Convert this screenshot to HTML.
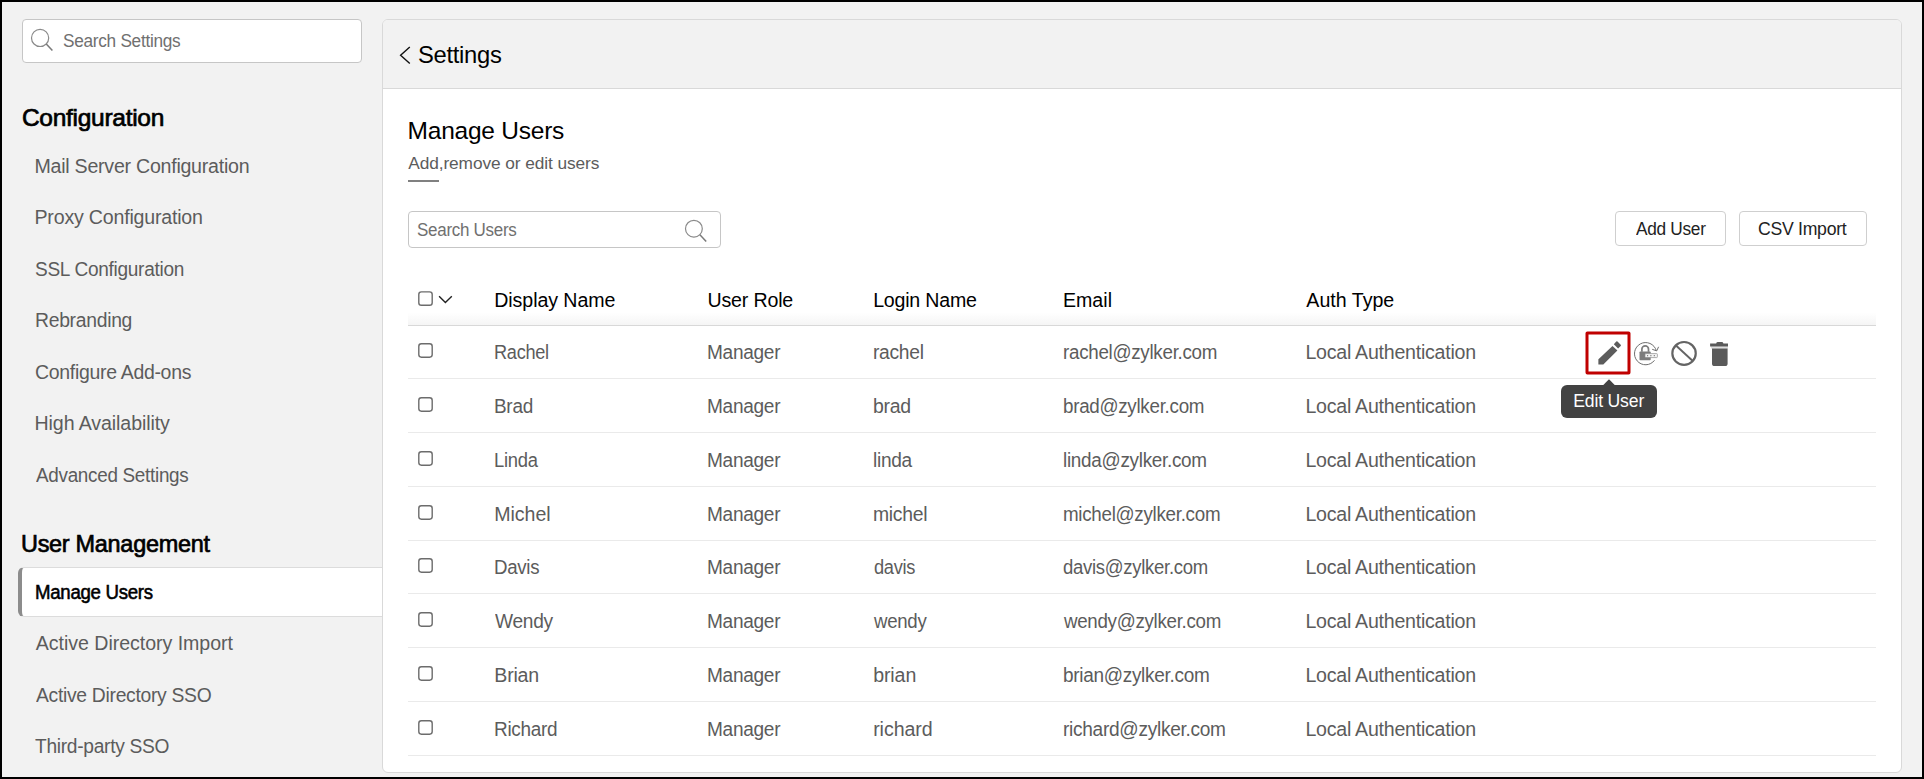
<!DOCTYPE html>
<html lang="en"><head><meta charset="utf-8"><title>Manage Users</title><style>
*{box-sizing:border-box}
html,body{margin:0;padding:0}
body{width:1924px;height:779px;background:#000;overflow:hidden;position:relative;font-family:"Liberation Sans", sans-serif}
#app{position:absolute;left:2px;top:2px;width:1920px;height:775px;background:#f2f2f2;overflow:hidden}
h1,h2,p,ul,li,a,button,label{margin:0;padding:0;font:inherit;border:0;background:none;list-style:none;text-decoration:none}
.a{position:absolute}
.t{position:absolute;white-space:nowrap;line-height:1;transform-origin:0 50%;font-weight:400}
.box{position:absolute;background:#fff;border:1px solid #c6c6c6;border-radius:4px}
.btn{border-color:#cfcfcf}
.line{position:absolute;left:406px;width:1468px;height:1px;background:#eaeaea}
.active{position:absolute;left:16px;top:565px;width:364px;height:50px;background:#fff;border-top:1px solid #dcdcdc;border-bottom:1px solid #dcdcdc;border-left:4px solid #8c8c8c;border-radius:6px 0 0 6px}
.panel{position:absolute;left:380px;top:17px;width:1520px;height:754px;background:#fff;border:1px solid #d9d9d9;border-radius:6px;overflow:hidden}
.panel-head{height:69px;background:#f2f2f2;border-bottom:1px solid #d9d9d9}
.thead-bg{position:absolute;left:406px;top:273px;width:1468px;height:50px;background:linear-gradient(#fff 0%,#fff 75%,#f5f5f5 100%)}
.tip{position:absolute;left:1559px;top:383px;width:96px;height:33px;background:#424242;border-radius:6px}
.rule{position:absolute;left:406px;top:178px;width:31px;height:2px;background:#808080}
</style></head><body><div id="app">
<aside class="sidebar">
 <div class="search" role="search">
  <div class="box" style="left:20px;top:17px;width:340px;height:44px"></div>
  <svg class="a" style="left:26px;top:23px" width="28" height="28" viewBox="28 25 28 28"><circle cx="40.1" cy="37.9" r="8.6" fill="none" stroke="#8a8a8a" stroke-width="1.2"/><path d="M46.3 44.1 L52.4 50.6" stroke="#7a7a7a" stroke-width="1.5" fill="none"/></svg>
  <label class="t" style="left:60.96px;top:30px;font-size:18.3px;color:#707070;transform:scaleX(0.9424);letter-spacing:-0.3px;">Search Settings</label>
 </div>
 <nav class="menu">
  <h2 class="t" style="left:19.9px;top:104px;font-size:24.5px;color:#000;-webkit-text-stroke:0.7px #000;letter-spacing:-0.275px;">Configuration</h2>
  <ul>
   <li><a class="t" style="left:32.5px;top:155px;font-size:19.6px;color:#5c5c5c;letter-spacing:-0.252px;">Mail Server Configuration</a></li>
   <li><a class="t" style="left:32.5px;top:206px;font-size:19.6px;color:#5c5c5c;letter-spacing:-0.203px;">Proxy Configuration</a></li>
   <li><a class="t" style="left:33.03px;top:258px;font-size:19.6px;color:#5c5c5c;transform:scaleX(0.9729);letter-spacing:-0.3px;">SSL Configuration</a></li>
   <li><a class="t" style="left:32.52px;top:309px;font-size:19.6px;color:#5c5c5c;transform:scaleX(0.9875);letter-spacing:-0.3px;">Rebranding</a></li>
   <li><a class="t" style="left:33.01px;top:361px;font-size:19.6px;color:#5c5c5c;transform:scaleX(0.9929);letter-spacing:-0.3px;">Configure Add-ons</a></li>
   <li><a class="t" style="left:32.5px;top:412px;font-size:19.6px;color:#5c5c5c;letter-spacing:-0.091px;">High Availability</a></li>
   <li><a class="t" style="left:34.0px;top:464px;font-size:19.6px;color:#5c5c5c;transform:scaleX(0.963);letter-spacing:-0.3px;">Advanced Settings</a></li>
  </ul>
  <h2 class="t" style="left:19.46px;top:530px;font-size:24.5px;color:#000;-webkit-text-stroke:0.7px #000;transform:scaleX(0.9574);letter-spacing:-0.3px;">User Management</h2>
  <ul>
   <li class="current"><div class="active"></div><a class="t" style="left:32.61px;top:581px;font-size:19.6px;color:#000;-webkit-text-stroke:0.55px #000;transform:scaleX(0.9514);letter-spacing:-0.3px;">Manage Users</a></li>
   <li><a class="t" style="left:33.8px;top:632px;font-size:19.6px;color:#5c5c5c;letter-spacing:-0.045px;">Active Directory Import</a></li>
   <li><a class="t" style="left:33.8px;top:684px;font-size:19.6px;color:#5c5c5c;transform:scaleX(0.9853);letter-spacing:-0.3px;">Active Directory SSO</a></li>
   <li><a class="t" style="left:33.31px;top:735px;font-size:19.6px;color:#5c5c5c;transform:scaleX(0.9794);letter-spacing:-0.3px;">Third-party SSO</a></li>
  </ul>
 </nav>
</aside>
<main class="content">
 <div class="panel"><div class="panel-head"></div></div>
 <header class="crumb">
  <svg class="a" style="left:396px;top:42px" width="16" height="24" viewBox="398 44 16 24"><path d="M409.8 47.1 L400.6 55.3 L409.8 63.5" fill="none" stroke="#111" stroke-width="1.4"/></svg>
  <a class="t" style="left:415.55px;top:41px;font-size:23.8px;color:#000;transform:scaleX(0.9994);letter-spacing:-0.3px;">Settings</a>
 </header>
 <section class="title">
  <h1 class="t" style="left:405.6px;top:117px;font-size:24.5px;color:#000;letter-spacing:-0.236px;">Manage Users</h1>
  <p class="t" style="left:406.2px;top:153px;font-size:17.3px;color:#5c5c5c;letter-spacing:-0.083px;">Add,remove or edit users</p>
  <div class="rule"></div>
 </section>
 <section class="toolbar">
  <div class="user-search" role="search">
   <div class="box" style="left:406px;top:209px;width:313px;height:37px"></div>
   <label class="t" style="left:415.47px;top:219px;font-size:18.3px;color:#707070;transform:scaleX(0.929);letter-spacing:-0.3px;">Search Users</label>
   <svg class="a" style="left:679px;top:214px" width="28" height="28" viewBox="681 216 28 28"><circle cx="693.9" cy="228.7" r="8.4" fill="none" stroke="#8a8a8a" stroke-width="1.2"/><path d="M699.9 234.8 L706.2 241.6" stroke="#7a7a7a" stroke-width="1.5" fill="none"/></svg>
  </div>
  <div class="actions"><div class="box btn" style="left:1613px;top:209px;width:111px;height:35px"></div><button class="t" style="left:1633.8px;top:218px;font-size:18.3px;color:#222;transform:scaleX(0.9432);letter-spacing:-0.3px;">Add User</button>
   <div class="box btn" style="left:1737px;top:209px;width:128px;height:35px"></div><button class="t" style="left:1756.13px;top:218px;font-size:18.3px;color:#222;transform:scaleX(0.9663);letter-spacing:-0.3px;">CSV Import</button></div>
 </section>
 <section class="users" role="table">
  <div class="thead" role="row">
   <div class="thead-bg"></div>
   <div class="line" style="top:323px;background:#d8d8d8"></div>
   <svg class="a" style="left:415px;top:288px" width="18" height="18" viewBox="417 290 18 18"><rect x="418.80" y="291.90" width="13.40" height="13.40" rx="2.6" fill="#fff" stroke="#6c6c6c" stroke-width="1.4"/></svg>
   <svg class="a" style="left:434px;top:290px" width="20" height="16" viewBox="436 292 20 16"><path d="M439.1 296.2 L445.4 302.5 L451.8 296.2" fill="none" stroke="#222" stroke-width="1.4"/></svg>
   <span class="t" style="left:492.2px;top:289px;font-size:19.6px;color:#000;letter-spacing:-0.064px;" role="columnheader">Display Name</span>
   <span class="t" style="left:705.5px;top:289px;font-size:19.6px;color:#000;letter-spacing:-0.169px;" role="columnheader">User Role</span>
   <span class="t" style="left:871.2px;top:289px;font-size:19.6px;color:#000;letter-spacing:-0.217px;" role="columnheader">Login Name</span>
   <span class="t" style="left:1060.9px;top:289px;font-size:19.6px;color:#000;letter-spacing:0.037px;" role="columnheader">Email</span>
   <span class="t" style="left:1304.3px;top:289px;font-size:19.6px;color:#000;letter-spacing:0.012px;" role="columnheader">Auth Type</span>
  </div>
  <div class="tr" role="row">
   <svg class="a" style="left:415px;top:340px" width="18" height="18" viewBox="417 342 18 18"><rect x="418.80" y="343.80" width="13.40" height="13.40" rx="2.6" fill="#fff" stroke="#6c6c6c" stroke-width="1.4"/></svg>
   <span class="t" style="left:492.41px;top:341px;font-size:19.6px;color:#5c5c5c;transform:scaleX(0.9269);letter-spacing:-0.3px;" role="cell">Rachel</span>
   <span class="t" style="left:705.34px;top:341px;font-size:19.6px;color:#5c5c5c;transform:scaleX(0.9729);letter-spacing:-0.3px;" role="cell">Manager</span>
   <span class="t" style="left:871.17px;top:341px;font-size:19.6px;color:#5c5c5c;transform:scaleX(0.9827);letter-spacing:-0.3px;" role="cell">rachel</span>
   <span class="t" style="left:1060.6px;top:341px;font-size:19.6px;color:#5c5c5c;transform:scaleX(0.9593);letter-spacing:-0.3px;" role="cell">rachel@zylker.com</span>
   <span class="t" style="left:1303.4px;top:341px;font-size:19.6px;color:#5c5c5c;letter-spacing:-0.247px;" role="cell">Local Authentication</span>
   <div class="row-actions" role="cell">
    <svg class="a" style="left:1581px;top:327px" width="50" height="48" viewBox="1583 329 50 48"><rect x="1587" y="332.9" width="42" height="40" rx="0.4" fill="none" stroke="#c00000" stroke-width="3"/></svg>
    <svg class="a" style="left:1594px;top:337px" width="28" height="28" viewBox="1596 339 28 28"><g fill="#5c5c5c"><path d="M1598.4 359.2 L1612.5 346.1 L1617.4 350.6 L1603.3 364.5 L1598.4 364.5 Z"/><path d="M1613.8 344.3 L1616.3 341.5 Q1616.9 340.9 1617.5 341.5 L1620.7 344.8 Q1621.3 345.4 1620.7 346 L1618.1 348.6 Z"/></g></svg>
    <svg class="a" style="left:1629px;top:337px" width="30" height="30" viewBox="1631 339 30 30">
<path d="M1656.3 350.7 A11.1 11.1 0 1 0 1654.5 360.3" fill="none" stroke="#6e6e6e" stroke-width="1"/>
<path d="M1652.2 349.3 L1656.7 350.9 L1658.6 346.8" fill="none" stroke="#6e6e6e" stroke-width="1"/>
<path d="M1641.9 351.8 v-2.7 a3.3 3.3 0 0 1 6.6 0 v2.7" fill="none" stroke="#7c7c7c" stroke-width="1.7"/>
<rect x="1639.5" y="351.5" width="11.2" height="8.7" rx="0.8" fill="#7c7c7c"/>
<rect x="1645" y="353.6" width="12.4" height="4" rx="0.8" fill="#f4f4f4" stroke="#8a8a8a" stroke-width="0.7"/>
<circle cx="1647.6" cy="355.7" r="0.65" fill="#6e6e6e"/><circle cx="1650.9" cy="355.7" r="0.65" fill="#6e6e6e"/><circle cx="1654.3" cy="355.7" r="0.65" fill="#6e6e6e"/></svg>
    <svg class="a" style="left:1667px;top:337px" width="30" height="30" viewBox="1669 339 30 30"><ellipse cx="1684.05" cy="353.4" rx="11.7" ry="11.4" fill="none" stroke="#646464" stroke-width="2.2"/><path d="M1675.7 345.2 L1692.5 360.8" stroke="#646464" stroke-width="1.9"/></svg>
    <svg class="a" style="left:1704px;top:337px" width="26" height="30" viewBox="1706 339 26 30"><rect x="1711" y="346.4" width="17" height="2.2" fill="#dedede"/><g fill="#5a5a5a"><path d="M1710.1 343.5 h6.1 q0.3 -1.4 1.6 -1.4 h4 q1.3 0 1.6 1.4 h4.6 v3 h-17.9 Z"/><path d="M1712 348.5 h15.6 v14.9 a2.6 2.6 0 0 1 -2.6 2.6 h-10.4 a2.6 2.6 0 0 1 -2.6 -2.6 Z"/></g></svg>
   </div>
   <div class="line" style="top:376px"></div>
  </div>
  <div class="tr" role="row">
   <svg class="a" style="left:415px;top:394px" width="18" height="18" viewBox="417 396 18 18"><rect x="418.80" y="397.80" width="13.40" height="13.40" rx="2.6" fill="#fff" stroke="#6c6c6c" stroke-width="1.4"/></svg>
   <span class="t" style="left:492.35px;top:395px;font-size:19.6px;color:#5c5c5c;transform:scaleX(0.9681);letter-spacing:-0.3px;" role="cell">Brad</span>
   <span class="t" style="left:705.34px;top:395px;font-size:19.6px;color:#5c5c5c;transform:scaleX(0.9729);letter-spacing:-0.3px;" role="cell">Manager</span>
   <span class="t" style="left:871.16px;top:395px;font-size:19.6px;color:#5c5c5c;transform:scaleX(0.993);letter-spacing:-0.3px;" role="cell">brad</span>
   <span class="t" style="left:1060.6px;top:395px;font-size:19.6px;color:#5c5c5c;transform:scaleX(0.9593);letter-spacing:-0.3px;" role="cell">brad@zylker.com</span>
   <span class="t" style="left:1303.4px;top:395px;font-size:19.6px;color:#5c5c5c;letter-spacing:-0.247px;" role="cell">Local Authentication</span>
   <div class="line" style="top:430px"></div>
  </div>
  <div class="tr" role="row">
   <svg class="a" style="left:415px;top:448px" width="18" height="18" viewBox="417 450 18 18"><rect x="418.80" y="451.80" width="13.40" height="13.40" rx="2.6" fill="#fff" stroke="#6c6c6c" stroke-width="1.4"/></svg>
   <span class="t" style="left:492.39px;top:449px;font-size:19.6px;color:#5c5c5c;transform:scaleX(0.9404);letter-spacing:-0.3px;" role="cell">Linda</span>
   <span class="t" style="left:705.34px;top:449px;font-size:19.6px;color:#5c5c5c;transform:scaleX(0.9729);letter-spacing:-0.3px;" role="cell">Manager</span>
   <span class="t" style="left:871.18px;top:449px;font-size:19.6px;color:#5c5c5c;transform:scaleX(0.9757);letter-spacing:-0.3px;" role="cell">linda</span>
   <span class="t" style="left:1060.59px;top:449px;font-size:19.6px;color:#5c5c5c;transform:scaleX(0.9649);letter-spacing:-0.3px;" role="cell">linda@zylker.com</span>
   <span class="t" style="left:1303.4px;top:449px;font-size:19.6px;color:#5c5c5c;letter-spacing:-0.247px;" role="cell">Local Authentication</span>
   <div class="line" style="top:484px"></div>
  </div>
  <div class="tr" role="row">
   <svg class="a" style="left:415px;top:502px" width="18" height="18" viewBox="417 504 18 18"><rect x="418.80" y="505.80" width="13.40" height="13.40" rx="2.6" fill="#fff" stroke="#6c6c6c" stroke-width="1.4"/></svg>
   <span class="t" style="left:492.3px;top:503px;font-size:19.6px;color:#5c5c5c;letter-spacing:-0.07px;" role="cell">Michel</span>
   <span class="t" style="left:705.34px;top:503px;font-size:19.6px;color:#5c5c5c;transform:scaleX(0.9729);letter-spacing:-0.3px;" role="cell">Manager</span>
   <span class="t" style="left:871.16px;top:503px;font-size:19.6px;color:#5c5c5c;transform:scaleX(0.9886);letter-spacing:-0.3px;" role="cell">michel</span>
   <span class="t" style="left:1060.6px;top:503px;font-size:19.6px;color:#5c5c5c;transform:scaleX(0.9592);letter-spacing:-0.3px;" role="cell">michel@zylker.com</span>
   <span class="t" style="left:1303.4px;top:503px;font-size:19.6px;color:#5c5c5c;letter-spacing:-0.247px;" role="cell">Local Authentication</span>
   <div class="line" style="top:538px"></div>
  </div>
  <div class="tr" role="row">
   <svg class="a" style="left:415px;top:555px" width="18" height="18" viewBox="417 557 18 18"><rect x="418.80" y="558.80" width="13.40" height="13.40" rx="2.6" fill="#fff" stroke="#6c6c6c" stroke-width="1.4"/></svg>
   <span class="t" style="left:492.37px;top:556px;font-size:19.6px;color:#5c5c5c;transform:scaleX(0.9528);letter-spacing:-0.3px;" role="cell">Davis</span>
   <span class="t" style="left:705.34px;top:556px;font-size:19.6px;color:#5c5c5c;transform:scaleX(0.9729);letter-spacing:-0.3px;" role="cell">Manager</span>
   <span class="t" style="left:871.7px;top:556px;font-size:19.6px;color:#5c5c5c;transform:scaleX(0.9315);letter-spacing:-0.3px;" role="cell">davis</span>
   <span class="t" style="left:1061.09px;top:556px;font-size:19.6px;color:#5c5c5c;transform:scaleX(0.945);letter-spacing:-0.3px;" role="cell">davis@zylker.com</span>
   <span class="t" style="left:1303.4px;top:556px;font-size:19.6px;color:#5c5c5c;letter-spacing:-0.247px;" role="cell">Local Authentication</span>
   <div class="line" style="top:591px"></div>
  </div>
  <div class="tr" role="row">
   <svg class="a" style="left:415px;top:609px" width="18" height="18" viewBox="417 611 18 18"><rect x="418.80" y="612.80" width="13.40" height="13.40" rx="2.6" fill="#fff" stroke="#6c6c6c" stroke-width="1.4"/></svg>
   <span class="t" style="left:492.76px;top:610px;font-size:19.6px;color:#5c5c5c;transform:scaleX(0.9771);letter-spacing:-0.3px;" role="cell">Wendy</span>
   <span class="t" style="left:705.34px;top:610px;font-size:19.6px;color:#5c5c5c;transform:scaleX(0.9729);letter-spacing:-0.3px;" role="cell">Manager</span>
   <span class="t" style="left:872.4px;top:610px;font-size:19.6px;color:#5c5c5c;transform:scaleX(0.9512);letter-spacing:-0.3px;" role="cell">wendy</span>
   <span class="t" style="left:1061.8px;top:610px;font-size:19.6px;color:#5c5c5c;transform:scaleX(0.9556);letter-spacing:-0.3px;" role="cell">wendy@zylker.com</span>
   <span class="t" style="left:1303.4px;top:610px;font-size:19.6px;color:#5c5c5c;letter-spacing:-0.247px;" role="cell">Local Authentication</span>
   <div class="line" style="top:645px"></div>
  </div>
  <div class="tr" role="row">
   <svg class="a" style="left:415px;top:663px" width="18" height="18" viewBox="417 665 18 18"><rect x="418.80" y="666.80" width="13.40" height="13.40" rx="2.6" fill="#fff" stroke="#6c6c6c" stroke-width="1.4"/></svg>
   <span class="t" style="left:492.3px;top:664px;font-size:19.6px;color:#5c5c5c;letter-spacing:-0.225px;" role="cell">Brian</span>
   <span class="t" style="left:705.34px;top:664px;font-size:19.6px;color:#5c5c5c;transform:scaleX(0.9729);letter-spacing:-0.3px;" role="cell">Manager</span>
   <span class="t" style="left:871.15px;top:664px;font-size:19.6px;color:#5c5c5c;letter-spacing:-0.1px;" role="cell">brian</span>
   <span class="t" style="left:1060.59px;top:664px;font-size:19.6px;color:#5c5c5c;transform:scaleX(0.9685);letter-spacing:-0.3px;" role="cell">brian@zylker.com</span>
   <span class="t" style="left:1303.4px;top:664px;font-size:19.6px;color:#5c5c5c;letter-spacing:-0.247px;" role="cell">Local Authentication</span>
   <div class="line" style="top:699px"></div>
  </div>
  <div class="tr" role="row">
   <svg class="a" style="left:415px;top:717px" width="18" height="18" viewBox="417 719 18 18"><rect x="418.80" y="720.80" width="13.40" height="13.40" rx="2.6" fill="#fff" stroke="#6c6c6c" stroke-width="1.4"/></svg>
   <span class="t" style="left:492.35px;top:718px;font-size:19.6px;color:#5c5c5c;transform:scaleX(0.9674);letter-spacing:-0.3px;" role="cell">Richard</span>
   <span class="t" style="left:705.34px;top:718px;font-size:19.6px;color:#5c5c5c;transform:scaleX(0.9729);letter-spacing:-0.3px;" role="cell">Manager</span>
   <span class="t" style="left:871.15px;top:718px;font-size:19.6px;color:#5c5c5c;letter-spacing:-0.058px;" role="cell">richard</span>
   <span class="t" style="left:1060.58px;top:718px;font-size:19.6px;color:#5c5c5c;transform:scaleX(0.9748);letter-spacing:-0.3px;" role="cell">richard@zylker.com</span>
   <span class="t" style="left:1303.4px;top:718px;font-size:19.6px;color:#5c5c5c;letter-spacing:-0.247px;" role="cell">Local Authentication</span>
   <div class="line" style="top:753px"></div>
  </div>
 </section>
 <div class="tooltip" role="tooltip">
  <div class="tip"></div>
  <svg class="a" style="left:1598px;top:376px" width="18" height="8" viewBox="1600 378 18 8"><path d="M1602.8 385.6 L1609 379.2 L1615.2 385.6 Z" fill="#424242"/></svg>
  <span class="t" style="left:1571.2px;top:391px;font-size:17.6px;color:#fff;letter-spacing:-0.163px;">Edit User</span>
 </div>
</main>
</div></body></html>
